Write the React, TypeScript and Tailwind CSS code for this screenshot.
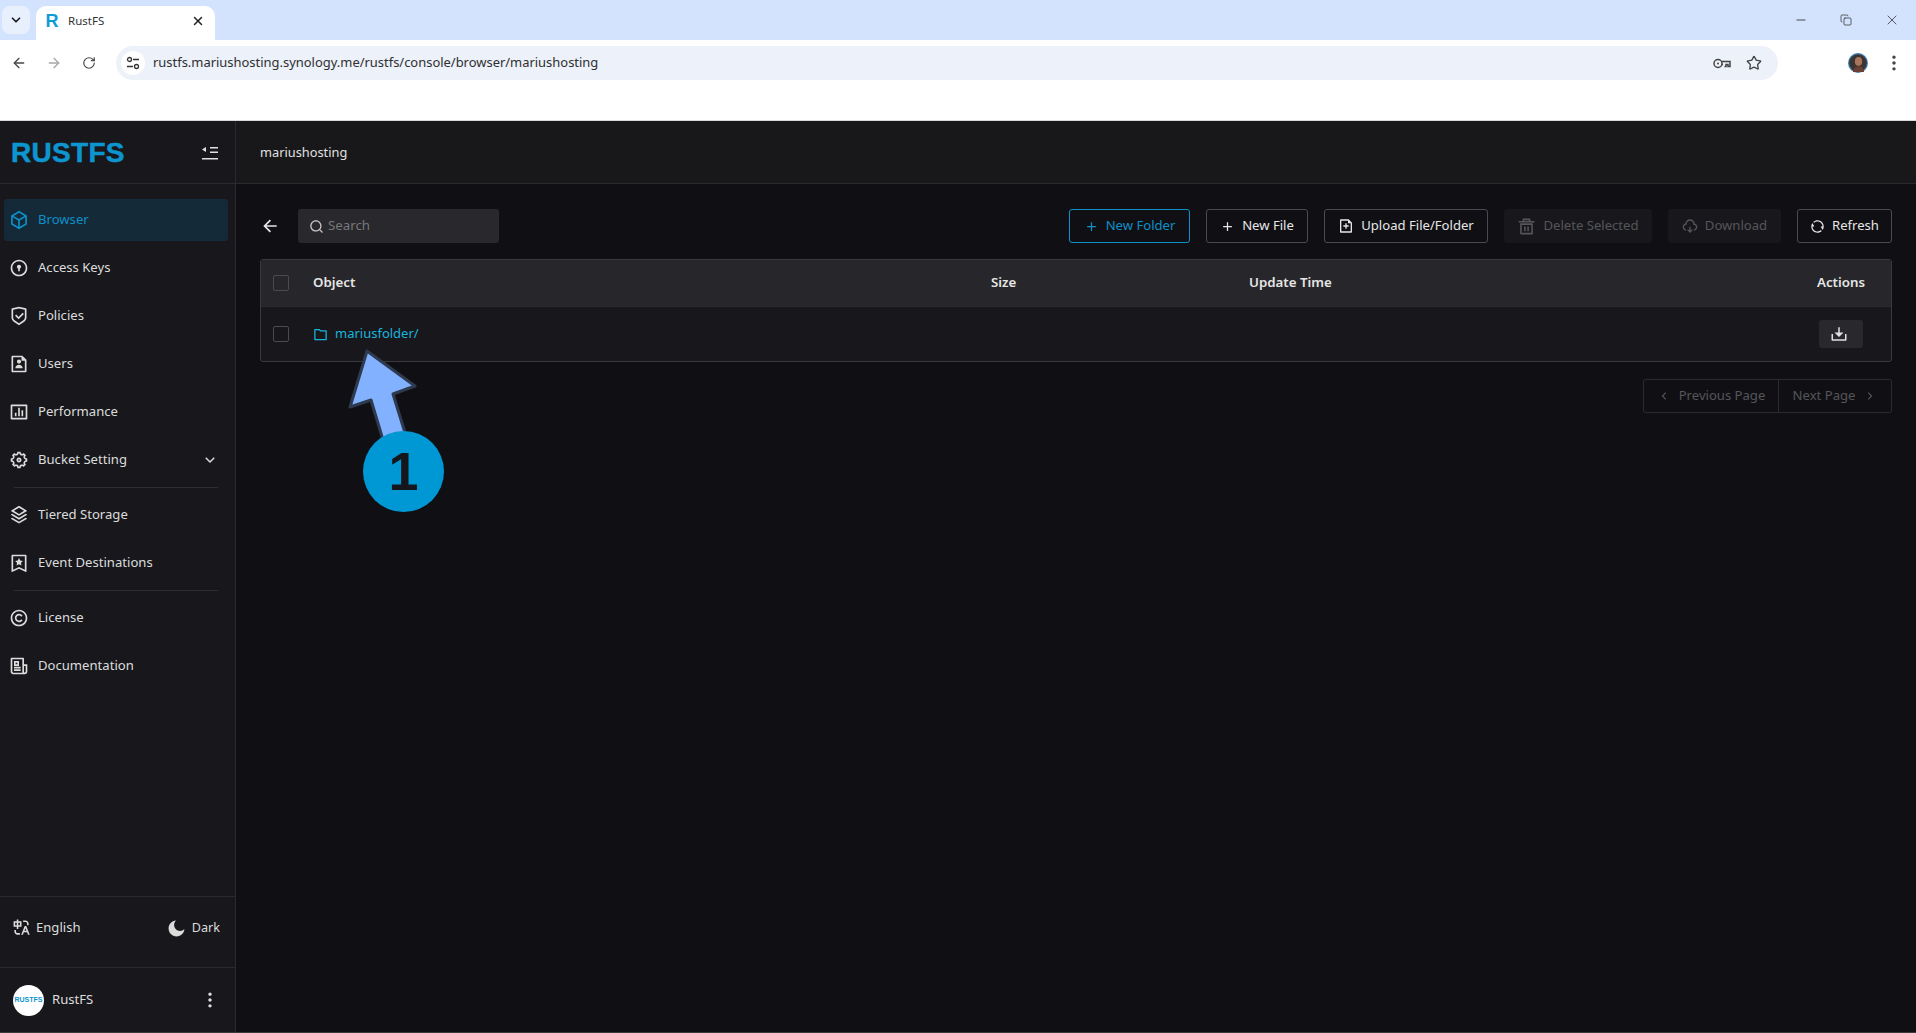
import {
  RiAddLine,
  RiArrowDownSLine,
  RiArrowLeftLine,
  RiArrowLeftSLine,
  RiArrowRightSLine,
  RiBarChartBoxLine,
  RiBookmark3Line,
  RiBox3Line,
  RiCopyrightLine,
  RiDeleteBin5Line,
  RiDoorLockLine,
  RiDownload2Line,
  RiDownloadCloud2Line,
  RiFileAddLine,
  RiFileUserLine,
  RiFolderLine,
  RiMoonFill,
  RiMore2Fill,
  RiNewspaperLine,
  RiRefreshLine,
  RiSearchLine,
  RiSettings5Line,
  RiShieldCheckLine,
  RiStackLine,
  RiTranslate,
} from "react-icons/ri";
import { ArrowLeft, ArrowRight, ChevronDown, Copy, Minus, RotateCw, Star, X } from "lucide-react";

const font = "font-['Noto_Sans','Open_Sans',sans-serif]";

const navTop = [
  { label: "Browser", icon: RiBox3Line, active: true },
  { label: "Access Keys", icon: RiDoorLockLine },
  { label: "Policies", icon: RiShieldCheckLine },
  { label: "Users", icon: RiFileUserLine },
  { label: "Performance", icon: RiBarChartBoxLine },
  { label: "Bucket Setting", icon: RiSettings5Line, chevron: true },
];
const navMid = [
  { label: "Tiered Storage", icon: RiStackLine },
  { label: "Event Destinations", icon: RiBookmark3Line },
];
const navEnd = [
  { label: "License", icon: RiCopyrightLine },
  { label: "Documentation", icon: RiNewspaperLine },
];

type NavEntry = { label: string; icon: typeof RiBox3Line; active?: boolean; chevron?: boolean };

function NavItem({ item }: { item: NavEntry }) {
  const Icon = item.icon;
  return (
    <div
      className={
        item.active
          ? "flex h-[42px] items-center rounded-[3px] bg-[#152a38] pl-[5px] pr-[9px] text-[#0d8fc8]"
          : "flex h-[42px] items-center pl-[5px] pr-[9px] text-[#dcdcdc]"
      }
    >
      <Icon className="h-[20px] w-[20px] shrink-0" />
      <span className="ml-[9px] flex-1 text-[13.1px]">{item.label}</span>
      {item.chevron && <RiArrowDownSLine className="h-[18px] w-[18px]" />}
    </div>
  );
}

function ChromeBar() {
  return (
    <div className="bg-white">
      <div className="flex h-[40px] bg-[#d3e3fd]">
        <div className="ml-[2px] mt-[6px] flex h-[28px] w-[28px] items-center justify-center rounded-[8px] bg-[#e8f0fe]">
          <ChevronDown className="h-[14px] w-[14px] text-[#1f1f1f]" strokeWidth={3} />
        </div>
        <div className="ml-[6px] mt-[6px] flex h-[34px] w-[179px] items-center rounded-t-[10px] bg-white pb-[4px] pl-[8px] pr-[10px]">
          <span className="w-[16px] text-center font-['Liberation_Sans',sans-serif] text-[18px] font-bold text-[#0f9bd7]">R</span>
          <span className="ml-[8px] flex-1 text-[11.5px] text-[#333]">RustFS</span>
          <X className="h-[14px] w-[14px] text-[#222]" strokeWidth={2.5} />
        </div>
        <div className="flex-1" />
        <div className="flex items-center gap-[32px] pb-[1px] pr-[16px] text-[#333]">
          <Minus className="h-[14px] w-[14px]" strokeWidth={1.5} />
          <Copy className="h-[12px] w-[12px]" strokeWidth={1.5} />
          <X className="h-[16px] w-[16px]" strokeWidth={1.2} />
        </div>
      </div>
      <div className="flex h-[81px] items-start border-b border-[#d8d8d8] pt-[6px]">
        <div className="flex h-[34px] w-[116px] items-center pl-[11px] text-[#474747]">
          <ArrowLeft className="h-[16px] w-[16px]" strokeWidth={2} />
          <ArrowRight className="ml-[19px] h-[16px] w-[16px] text-[#a8a8a8]" strokeWidth={2} />
          <RotateCw className="ml-[20px] h-[14px] w-[14px]" strokeWidth={2} />
        </div>
        <div className="flex h-[34px] w-[1662px] items-center rounded-full bg-[#ecf1fa] pl-[5px] pr-[16px]">
          <div className="flex h-[24px] w-[24px] items-center justify-center rounded-full bg-white">
            <svg viewBox="0 0 14 14" className="h-[14px] w-[14px]" fill="none" stroke="#333" strokeWidth="1.3">
              <circle cx="3.5" cy="3.5" r="2" />
              <path d="M7 3.5h6M1 10.5h6" />
              <circle cx="10.5" cy="10.5" r="2" />
            </svg>
          </div>
          <span className="ml-[8px] flex-1 text-[12.95px] text-[#2f2f2f]">
            rustfs.mariushosting.synology.me/rustfs/console/browser/mariushosting
          </span>
          <svg viewBox="0 0 18 11" className="mr-[2px] h-[11px] w-[18px]" fill="none" stroke="#444" strokeWidth="1.5">
            <circle cx="5" cy="5.5" r="4" />
            <circle cx="5" cy="5.5" r="1" fill="#444" stroke="none" />
            <path d="M9 3.5h8v5h-2v-2h-2v2h-1.5M9 6.5h1" />
          </svg>
          <Star className="ml-[13px] h-[16px] w-[16px] text-[#444]" strokeWidth={2} />
        </div>
        <div className="flex h-[34px] flex-1 items-center pl-[70px]">
          <svg viewBox="0 0 20 20" className="h-[20px] w-[20px]">
            <circle cx="10" cy="10" r="10" fill="#3f7fb5" />
            <circle cx="10" cy="10" r="8.8" fill="#3a3533" />
            <ellipse cx="10.5" cy="8.5" rx="3.6" ry="4.4" fill="#a9745c" />
            <path d="M5 19c0-4 2.5-5.5 5.5-5.5S16 15 16 19z" fill="#6b3f33" />
          </svg>
          <RiMore2Fill className="ml-[16px] h-[20px] w-[20px] text-[#444]" />
        </div>
      </div>
    </div>
  );
}

function ToolButton({
  icon: Icon,
  label,
  tone,
  width,
  iconClass = "h-[15px] w-[15px]",
}: {
  icon: typeof RiBox3Line;
  label: string;
  tone?: "primary" | "off";
  width: string;
  iconClass?: string;
}) {
  let cls = "border border-[#4a4a50] text-[#e6e6e6]";
  if (tone === "primary") cls = "border border-[#0d8fc8] text-[#0d8fc8]";
  if (tone === "off") cls = "bg-[#18181c] text-[#55555a]";
  return (
    <div className={`flex h-[34px] items-center justify-center gap-[7px] rounded-[3px] text-[13.1px] ${width} ${cls}`}>
      <Icon className={iconClass} />
      <span>{label}</span>
    </div>
  );
}

function Annotation() {
  return (
    <div className="absolute left-[290px] top-[340px] h-[180px] w-[160px]">
      <svg viewBox="0 0 160 180" className="h-full w-full">
        <path
          d="M77 11 L125 46 L103 54 L116 96 L93 100 L81 60 L60 67 Z"
          fill="#82b1ff"
          stroke="#2e3a4f"
          strokeWidth="3"
          strokeLinejoin="round"
        />
      </svg>
      <div className="absolute left-[73px] top-[91px] flex h-[81px] w-[81px] items-center justify-center rounded-full bg-[#0098d4] font-['Liberation_Sans',sans-serif] text-[54px] font-bold text-[#14161c]">
        1
      </div>
    </div>
  );
}

export default function App() {
  return (
    <div className={`relative flex h-[1033px] w-[1916px] flex-col overflow-hidden bg-[#101014] ${font}`}>
      <ChromeBar />
      <div className="flex flex-1 border-b border-[#3a3a3e]">
        {/* Sidebar */}
        <aside className="flex w-[236px] flex-col border-r border-[#2b2b2f] bg-[#18181c]">
          <div className="flex h-[63px] items-center justify-between border-b border-[#2b2b2f] pl-[11px] pr-[17px] pt-[1px]">
            <span className="font-['Liberation_Sans',sans-serif] text-[28px] font-bold tracking-[0.3px] text-[#0d95d0] [-webkit-text-stroke:0.5px_#0d95d0]">
              RUSTFS
            </span>
            <svg viewBox="0 0 16 14" className="h-[14px] w-[16px]" fill="#e0e0e0">
              <path d="M0 3.5 4 1v5z" />
              <path d="M8 1h8v1.4H8zM8 5.5h8v1.4H8zM0 12h16v1.5H0z" />
            </svg>
          </div>
          <nav className="flex-1 pl-[4px] pr-[7px] pt-[15px]">
            <div className="flex flex-col gap-[6px]">
              {navTop.map((item) => (
                <NavItem key={item.label} item={item} />
              ))}
            </div>
            <div className="mx-[10px] my-[6px] h-px bg-[#2e2e33]" />
            <div className="flex flex-col gap-[6px]">
              {navMid.map((item) => (
                <NavItem key={item.label} item={item} />
              ))}
            </div>
            <div className="mx-[10px] my-[6px] h-px bg-[#2e2e33]" />
            <div className="flex flex-col gap-[6px]">
              {navEnd.map((item) => (
                <NavItem key={item.label} item={item} />
              ))}
            </div>
          </nav>
          <div className="flex h-[71px] items-center justify-between border-t border-[#2b2b2f] pb-[8px] pl-[12px] pr-[15px] text-[13.1px] text-[#dcdcdc]">
            <div className="flex items-center gap-[5px]">
              <RiTranslate className="h-[19px] w-[19px]" />
              <span>English</span>
            </div>
            <div className="flex items-center gap-[6px]">
              <RiMoonFill className="h-[19px] w-[19px]" />
              <span className="text-[12.6px]">Dark</span>
            </div>
          </div>
          <div className="flex h-[65px] items-center border-t border-[#2b2b2f] pl-[13px] pr-[15px] text-[13.1px] text-[#dcdcdc]">
            <div className="flex h-[31px] w-[31px] items-center justify-center rounded-full bg-white font-['Liberation_Sans',sans-serif] text-[7px] font-bold text-[#0d95d0]">
              RUSTFS
            </div>
            <span className="ml-[8px] flex-1">RustFS</span>
            <RiMore2Fill className="h-[20px] w-[20px]" />
          </div>
        </aside>

        {/* Main */}
        <main className="flex flex-1 flex-col">
          <div className="flex h-[63px] items-center border-b border-[#2b2b2f] bg-[#18181a] pl-[24px] pt-[2px] text-[12.8px] text-[#e0e0e0]">
            mariushosting
          </div>
          <div className="flex flex-1 flex-col pl-[24px] pr-[24px] pt-[25px]">
            <div className="flex h-[34px] items-center">
              <RiArrowLeftLine className="h-[20px] w-[20px] text-[#e6e6e6]" />
              <div className="ml-[18px] flex h-[34px] w-[201px] items-center rounded-[3px] bg-[#29292d] pl-[11px] text-[13.3px] text-[#77777c]">
                <RiSearchLine className="h-[15px] w-[15px] text-[#c8c8c8]" />
                <span className="ml-[4px]">Search</span>
              </div>
              <div className="ml-auto flex gap-[16px]">
                <ToolButton icon={RiAddLine} label="New Folder" tone="primary" width="w-[121px]" />
                <ToolButton icon={RiAddLine} label="New File" width="w-[102px]" />
                <ToolButton icon={RiFileAddLine} label="Upload File/Folder" width="w-[164px]" iconClass="h-[16px] w-[16px]" />
                <ToolButton icon={RiDeleteBin5Line} label="Delete Selected" tone="off" width="w-[148px]" iconClass="h-[19px] w-[19px]" />
                <ToolButton icon={RiDownloadCloud2Line} label="Download" tone="off" width="w-[113px]" iconClass="h-[16px] w-[16px]" />
                <ToolButton icon={RiRefreshLine} label="Refresh" width="w-[95px]" />
              </div>
            </div>

            <div className="mt-[16px] rounded-[3px] border border-[#3a3a3e] bg-[#18181c]">
              <div className="flex h-[47px] items-center border-b border-[#2b2b2f] bg-[#27272b] text-[13.3px] font-semibold text-[#e6e6e6]">
                <div className="ml-[12px] h-[16px] w-[16px] rounded-[2px] border border-[#4a4a50]" />
                <span className="ml-[24px] w-[678px]">Object</span>
                <span className="w-[258px]">Size</span>
                <span className="flex-1">Update Time</span>
                <span className="pr-[26px]">Actions</span>
              </div>
              <div className="flex h-[54px] items-center text-[13px]">
                <div className="ml-[12px] h-[16px] w-[16px] rounded-[2px] border border-[#4a4a50]" />
                <RiFolderLine className="ml-[24px] h-[15px] w-[15px] text-[#19b4dc]" />
                <span className="ml-[7px] flex-1 text-[#19b4dc]">mariusfolder/</span>
                <div className="mr-[28px] flex h-[28px] w-[44px] items-center justify-center rounded-[3px] bg-[#29292d] pr-[5px]">
                  <RiDownload2Line className="h-[18px] w-[18px] text-[#e0e0e0]" />
                </div>
              </div>
            </div>

            <div className="mt-[17px] flex justify-end">
              <div className="flex h-[34px] items-center rounded-[3px] border border-[#2b2b2f] text-[13.1px] text-[#55555a]">
                <div className="flex h-full w-[135px] items-center justify-center gap-[8px] border-r border-[#2b2b2f]">
                  <RiArrowLeftSLine className="h-[14px] w-[14px]" />
                  <span>Previous Page</span>
                </div>
                <div className="flex h-full w-[112px] items-center justify-center gap-[8px]">
                  <span>Next Page</span>
                  <RiArrowRightSLine className="h-[14px] w-[14px]" />
                </div>
              </div>
            </div>
          </div>
        </main>
      </div>
      <Annotation />
    </div>
  );
}
